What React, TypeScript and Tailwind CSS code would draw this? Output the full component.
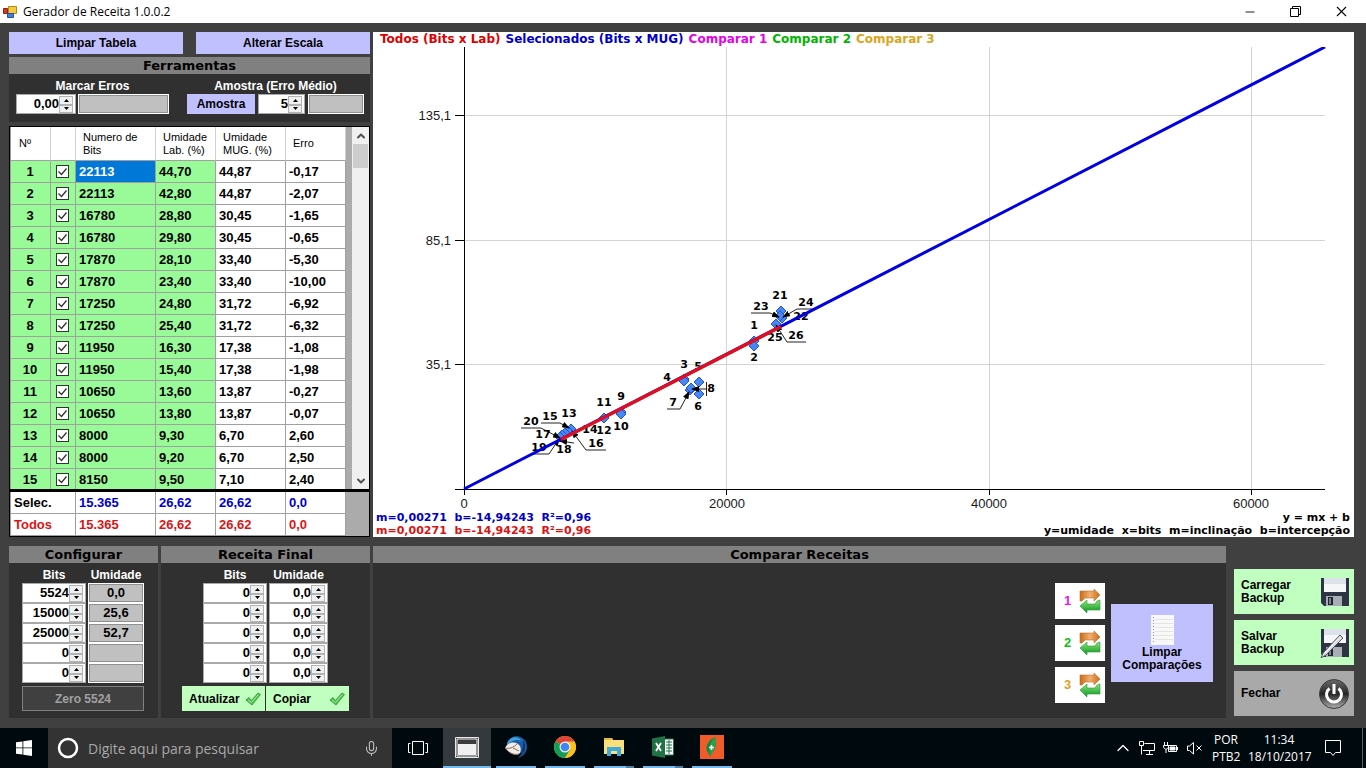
import React from 'react';
import { Minus, X, Mic, ChevronUp, ChevronDown } from 'lucide-react';

const ROWS = [
  ['22113', '44,70', '44,87', '-0,17'],
  ['22113', '42,80', '44,87', '-2,07'],
  ['16780', '28,80', '30,45', '-1,65'],
  ['16780', '29,80', '30,45', '-0,65'],
  ['17870', '28,10', '33,40', '-5,30'],
  ['17870', '23,40', '33,40', '-10,00'],
  ['17250', '24,80', '31,72', '-6,92'],
  ['17250', '25,40', '31,72', '-6,32'],
  ['11950', '16,30', '17,38', '-1,08'],
  ['11950', '15,40', '17,38', '-1,98'],
  ['10650', '13,60', '13,87', '-0,27'],
  ['10650', '13,80', '13,87', '-0,07'],
  ['8000', '9,30', '6,70', '2,60'],
  ['8000', '9,20', '6,70', '2,50'],
  ['8150', '9,50', '7,10', '2,40'],
];

const TOTALS = [
  { label: 'Selec.', head: 'text-black', color: 'text-[#0000cd]', values: ['15.365', '26,62', '26,62', '0,0'] },
  { label: 'Todos', head: 'text-[#dc1414]', color: 'text-[#dc1414]', values: ['15.365', '26,62', '26,62', '0,0'] },
];

const CONFIG = [
  { bits: '5524', umidade: '0,0' },
  { bits: '15000', umidade: '25,6' },
  { bits: '25000', umidade: '52,7' },
  { bits: '0', umidade: '' },
  { bits: '0', umidade: '' },
];

const LEGEND = [
  { text: 'Todos (Bits x Lab)', color: 'text-[#dc0000]' },
  { text: 'Selecionados (Bits x MUG)', color: 'text-[#0000c8]' },
  { text: 'Comparar 1', color: 'text-[#e600e6]' },
  { text: 'Comparar 2', color: 'text-[#00b400]' },
  { text: 'Comparar 3', color: 'text-[#daa520]' },
];

const COMPARE = [
  { n: 1, color: 'text-[#f014f0]' },
  { n: 2, color: 'text-[#14be14]' },
  { n: 3, color: 'text-[#e0a030]' },
];

// Chart data, in chart units
const POINTS = [
  [754, 341], [754, 346], [684, 379], [684, 381], [699, 382], [699, 394], [690, 390], [691, 388],
  [621, 412], [621, 414], [604, 418], [571, 429], [568, 431], [565, 433], [562, 435], [560, 437],
  [781, 311], [782, 318], [780, 316], [776, 324],
];

const POINT_LABELS: [string, number, number][] = [
  ['1', 754, 329], ['2', 754, 361], ['3', 684, 368], ['4', 667, 381], ['5', 698, 370], ['6', 698, 410],
  ['7', 673, 406], ['8', 711, 392], ['9', 621, 400], ['10', 621, 430], ['11', 604, 406], ['12', 604, 434],
  ['13', 569, 417], ['14', 590, 433], ['15', 550, 420], ['16', 596, 447], ['17', 543, 438], ['18', 564, 453],
  ['19', 539, 451], ['20', 531, 425], ['21', 780, 299], ['22', 801, 320], ['23', 761, 310], ['24', 806, 306],
  ['25', 775, 341], ['26', 796, 339],
];

const CALLOUTS = [
  '521,428 541,428 560,438',
  '541,423 560,423 569,428',
  '533,454 549,454 559,439',
  '574,443 560,441',
  '606,450 586,450 572,431',
  '667,409 680,409 689,392',
  '706,389 692,389',
  '813,309 797,309 783,317',
  '751,313 770,313 779,317',
  '806,342 787,342 776,325',
];

interface SpinnerProps {
  label: string;
  value: string;
  className?: string;
}

const Spinner: React.FC<SpinnerProps> = ({ label, value, className }) => (
  <div className={`flex h-5 border border-[#a9a9a9] bg-white ${className ?? ''}`}>
    <input
      aria-label={label}
      defaultValue={value}
      className="min-w-0 flex-1 bg-white pb-px text-right text-[13px] leading-4 font-bold text-black outline-none"
    />
    <div className="flex w-4 shrink-0 flex-col pt-px pr-[2px]">
      <button aria-label={`${label} +`} className="flex flex-1 items-center justify-center border border-[#b4b4b4] bg-[#f0f0f0]">
        <svg width="5" height="3" viewBox="0 0 5 3"><path d="M0 3 2.500 0 5 3z" /></svg>
      </button>
      <button aria-label={`${label} -`} className="flex flex-1 items-center justify-center border border-[#b4b4b4] bg-[#f0f0f0]">
        <svg width="5" height="3" viewBox="0 0 5 3"><path d="M0 0 2.500 3 5 0z" /></svg>
      </button>
    </div>
  </div>
);

const ValueBox: React.FC<{ label: string; value?: string; className?: string }> = ({ label, value = '', className }) => (
  <input
    readOnly
    aria-label={label}
    value={value}
    className={`h-5 min-w-0 border border-white bg-[#c0c0c0] pb-px text-center text-[13px] leading-4 font-bold text-black outline outline-1 -outline-offset-2 outline-[#909090] ${className ?? ''}`}
  />
);

const RowCheck: React.FC<{ label: string }> = ({ label }) => (
  <label className="ml-[2px] grid h-[13px] w-[13px]">
    <input
      type="checkbox"
      defaultChecked
      aria-label={label}
      className="peer col-start-1 row-start-1 h-[13px] w-[13px] appearance-none border border-[#333] bg-white"
    />
    <svg width="13" height="13" viewBox="0 0 13 13" className="pointer-events-none invisible col-start-1 row-start-1 peer-checked:visible">
      <path d="M2.500 6.500 5.500 9.500 10.500 3.500" fill="none" stroke="#333" strokeWidth="1.300" />
    </svg>
  </label>
);

const PanelTitle: React.FC<{ children: React.ReactNode }> = ({ children }) => (
  <h2 className="h-[17px] bg-[#808080] text-center font-['DejaVu_Sans'] text-[13px] leading-[17px] font-bold text-black">
    {children}
  </h2>
);

const CheckIcon = () => (
  <svg width="16" height="14" viewBox="0 0 16 14">
    <path d="M1 8 4 5.500 6.500 8.500 13 1 15.500 2.500 7 13z" fill="#4cc44c" stroke="#2f8f3a" strokeWidth="0.8" />
    <path d="M3 8 6.500 10.500 13.500 2.500" fill="none" stroke="#a4eea0" strokeWidth="1" />
  </svg>
);

const SwapIcon = () => (
  <svg width="22" height="24" viewBox="0 0 22 24">
    <defs>
      <linearGradient id="swapO" x1="0" y1="0" x2="1" y2="0">
        <stop offset="0" stopColor="#c86a18" />
        <stop offset="0.5" stopColor="#f0b070" />
        <stop offset="1" stopColor="#cc6a14" />
      </linearGradient>
      <linearGradient id="swapG" x1="0" y1="0" x2="0" y2="1">
        <stop offset="0" stopColor="#8ae47c" />
        <stop offset="1" stopColor="#0c9420" />
      </linearGradient>
    </defs>
    <path d="M1 12V2h14V0l6 6-6 6V9H6l-3 3z" fill="url(#swapO)" stroke="#c07028" strokeWidth="0.6" />
    <path d="M21 11v10H8v3l-7-7 7-6v4h8l2-3z" fill="url(#swapG)" stroke="#229a30" strokeWidth="0.6" />
  </svg>
);

const FloppyIcon = ({ pen = false }: { pen?: boolean }) => (
  <svg width="30" height="30" viewBox="0 0 30 30">
    <path d="M1 1h28v28H4l-3-3z" fill="#2e3444" />
    <path d="M4 1h22v14H4z" fill="#dde2ea" />
    <path d="M4 7h22v8H4z" fill="#f4f6f8" />
    <path d="M6 19h16v10H6z" fill="#a9adb5" />
    <path d="M8 20h5v8H8z" fill="#20242e" />
    <path d="M9 21h2v6H9z" fill="#7c828e" />
    {pen && (
      <>
        <path d="M1 30 3 25 20 7l3 3L6 27z" fill="#d8dade" stroke="#50545c" strokeWidth="1" />
        <path d="M5 25 20 9" stroke="#fff" strokeWidth="1" />
      </>
    )}
  </svg>
);

const PowerIcon = () => (
  <svg width="30" height="30" viewBox="0 0 30 30">
    <defs>
      <linearGradient id="power" x1="0" y1="0" x2="0" y2="1">
        <stop offset="0" stopColor="#6a6a6a" />
        <stop offset="0.5" stopColor="#262626" />
        <stop offset="1" stopColor="#b0b0b0" />
      </linearGradient>
    </defs>
    <circle cx="15" cy="15" r="14.500" fill="url(#power)" stroke="#3c3c3c" />
    <path d="M10.500 9.500a7.500 7.500 0 1 0 9 0M15 5v10" fill="none" stroke="#fff" strokeWidth="3" />
  </svg>
);

const PaperIcon = () => (
  <svg width="23" height="30" viewBox="0 0 23 30">
    <path d="M0 0h23v30H0z" fill="#f8f8f8" />
    <path d="M4 4.500h18M4 8.500h18M4 12.500h18M4 16.500h18M4 20.500h18M4 24.500h18" stroke="#e4e4e4" />
    <path d="M2.500 2v26" stroke="#909090" strokeDasharray="1 2" />
  </svg>
);

const TitleBar = () => (
  <header className="flex h-[23px] shrink-0 items-center bg-white pr-[2px] pl-[3px] text-black">
    <svg width="14" height="14" viewBox="0 0 14 14">
      <path d="M5.500 1.500h8v7h-8z" fill="#f5c93c" stroke="#b08a20" />
      <path d="M.5 3.500h4v5h-4z" fill="#d03a28" stroke="#902010" />
      <path d="M4.500 8.500h6v4h-6z" fill="#4a7fd8" stroke="#2850a0" />
    </svg>
    <h1 className="ml-[6px] flex-1 font-['Open_Sans'] text-[12px] leading-4 font-normal">Gerador de Receita 1.0.0.2</h1>
    <button aria-label="Minimizar" className="flex h-full w-[45px] items-center justify-center"><Minus size={14} strokeWidth={1.500} /></button>
    <button aria-label="Restaurar" className="flex h-full w-[46px] items-center justify-center">
      <svg width="11" height="11" viewBox="0 0 11 11" fill="none" stroke="#000">
        <path d="M.5 2.500h8v8h-8zM2.500 2.500v-2h8v8h-2" />
      </svg>
    </button>
    <button aria-label="Fechar janela" className="flex h-full w-[46px] items-center justify-center"><X size={17} strokeWidth={1.500} /></button>
  </header>
);

const Tools = () => (
  <section>
    <div className="mb-[3px] grid grid-cols-2 gap-[13px]">
      <button className="h-[22px] bg-[#c0c0ff]">Limpar Tabela</button>
      <button className="h-[22px] bg-[#c0c0ff]">Alterar Escala</button>
    </div>
    <PanelTitle>Ferramentas</PanelTitle>
    <div className="flex h-12 justify-between bg-[#303030] pt-1 pr-[6px] pl-[7px] text-white">
      <div>
        <div className="text-center leading-4">Marcar Erros</div>
        <div className="flex gap-[2px]">
          <Spinner label="Marcar Erros" value="0,00" className="w-[60px]" />
          <ValueBox label="Total de erros" className="w-[91px]" />
        </div>
      </div>
      <div>
        <div className="text-center leading-4">Amostra (Erro Médio)</div>
        <div className="flex gap-[3px]">
          <button className="h-5 w-[68px] bg-[#c0c0ff] text-black">Amostra</button>
          <Spinner label="Amostra" value="5" className="w-[47px]" />
          <ValueBox label="Erro médio" className="w-[56px]" />
        </div>
      </div>
    </div>
  </section>
);

const Columns = () => (
  <colgroup>
    <col className="w-10" />
    <col className="w-[25px]" />
    <col className="w-20" />
    <col className="w-[60px]" />
    <col className="w-[70px]" />
    <col className="w-[60px]" />
  </colgroup>
);

const DataGrid = () => {
  const head = 'h-[34px] border-r border-b border-[#d0d0d0] border-b-[#a0a0a0] bg-white p-0 text-left align-middle text-[11px] leading-[13px] font-normal';
  const cell = 'h-[22px] border-r border-b border-[#a0a0a0] p-0 pl-[3px] text-[13px] leading-4';
  return (
    <section className="mt-1 border border-black bg-black text-black">
      <div className="flex h-[362px] overflow-hidden bg-[#ababab]">
        <table className="w-[336px] table-fixed border-separate border-spacing-0 border-l border-[#a0a0a0]">
          <Columns />
          <thead>
            <tr>
              <th className={`${head} pl-2`}>Nº</th>
              <th className={head} aria-label="Selecionado" />
              <th className={`${head} pl-[7px]`}>Numero de<br />Bits</th>
              <th className={`${head} pl-[7px]`}>Umidade<br />Lab. (%)</th>
              <th className={`${head} pl-[7px]`}>Umidade<br />MUG. (%)</th>
              <th className={`${head} pl-[7px]`}>Erro</th>
            </tr>
          </thead>
          <tbody>
            {ROWS.map((row, i) => (
              <tr key={i}>
                <td className={`${cell} bg-[#98fb98] pr-1 text-center`}>{i + 1}</td>
                <td className={`${cell} bg-[#98fb98]`}><RowCheck label={`Linha ${i + 1}`} /></td>
                <td className={`${cell} ${i === 0 ? 'bg-[#0078d7] text-white' : 'bg-[#98fb98]'}`}>{row[0]}</td>
                <td className={`${cell} bg-[#98fb98]`}>{row[1]}</td>
                <td className={`${cell} bg-white`}>{row[2]}</td>
                <td className={`${cell} bg-white`}>{row[3]}</td>
              </tr>
            ))}
          </tbody>
        </table>
        <div className="ml-auto flex w-[17px] flex-col items-center bg-[#f0f0f0]">
          <button aria-label="Rolar para cima" className="flex h-[17px] items-center text-[#505050]"><ChevronUp size={12} strokeWidth={4} /></button>
          <div className="h-6 w-[15px] bg-[#cdcdcd]" />
          <button aria-label="Rolar para baixo" className="mt-auto flex h-[17px] items-center text-[#505050]"><ChevronDown size={12} strokeWidth={4} /></button>
        </div>
      </div>
      <div className="mt-[3px] bg-[#ababab]">
        <table className="w-[336px] table-fixed border-separate border-spacing-0 border-l border-[#a0a0a0]">
          <Columns />
          <tbody>
            {TOTALS.map(t => (
              <tr key={t.label} className="bg-white">
                <th colSpan={2} className={`${cell} text-left ${t.head}`}>{t.label}</th>
                {t.values.map((v, i) => (
                  <td key={i} className={`${cell} ${t.color}`}>{v}</td>
                ))}
              </tr>
            ))}
          </tbody>
        </table>
      </div>
    </section>
  );
};

const Chart = () => (
  <section className="flex min-w-0 flex-1 flex-col bg-white font-['DejaVu_Sans'] text-[11px] leading-[13px] whitespace-pre">
    <div className="flex h-[15px] gap-[5px] pt-px pl-[7px] text-[12px]">
      {LEGEND.map(l => (
        <span key={l.text} className={l.color}>{l.text}</span>
      ))}
    </div>
    <svg viewBox="373 47 981 464" className="min-h-0 w-full flex-1">
      <defs>
        <marker id="arrow" markerWidth="8" markerHeight="6" refX="7" refY="3" orient="auto">
          <path d="M0 0 8 3 0 6z" fill="#000" />
        </marker>
      </defs>
      <path d="M464 115.500H1325M464 240.500H1325M464 364.500H1325M726.500 47V489M989.500 47V489M1251.500 47V489" stroke="#d3d3d3" />
      <path d="M464.500 47V495M455 489.500H1325M455 115.500H464M455 240.500H464M455 364.500H464M726.500 489V495M989.500 489V495M1251.500 489V495" stroke="#000" />
      <g fontFamily="Liberation Sans" fontSize="13" fontWeight="400" fill="#1a1a1a">
        <text x="451" y="120" textAnchor="end">135,1</text>
        <text x="451" y="245" textAnchor="end">85,1</text>
        <text x="451" y="369" textAnchor="end">35,1</text>
        <text x="464" y="508" textAnchor="middle">0</text>
        <text x="727" y="508" textAnchor="middle">20000</text>
        <text x="989" y="508" textAnchor="middle">40000</text>
        <text x="1251" y="508" textAnchor="middle">60000</text>
      </g>
      {POINTS.map(([x, y], i) => (
        <path key={i} d={`M${x} ${y - 5}l5 5-5 5-5-5z`} fill="#4488f4" stroke="#2a50d0" />
      ))}
      {CALLOUTS.map(c => (
        <polyline key={c} points={c} fill="none" stroke="#222" markerEnd="url(#arrow)" />
      ))}
      <path d="M706.500 382V396" stroke="#222" />
      {POINT_LABELS.map(([text, x, y]) => (
        <text key={text} x={x} y={y} textAnchor="middle" fontSize="11" fontWeight="700">{text}</text>
      ))}
      <path d="M464 489 1325 47" stroke="#0000e0" strokeWidth="3" />
      <path d="M561 439.500 781 326.500" stroke="#dc1020" strokeWidth="3.500" />
    </svg>
    <div className="flex justify-between pr-1 pl-[3px] text-black">
      <div>
        <div className="text-[#0000c8]">{'m=0,00271  b=-14,94243  R²=0,96'}</div>
        <div className="text-[#d81414]">{'m=0,00271  b=-14,94243  R²=0,96'}</div>
      </div>
      <div className="text-right">
        <div>y = mx + b</div>
        <div>{'y=umidade  x=bits  m=inclinação  b=intercepção'}</div>
      </div>
    </div>
  </section>
);

const ConfigPanel = () => (
  <section className="w-[149px] bg-[#303030]">
    <PanelTitle>Configurar</PanelTitle>
    <div className="grid grid-cols-[64px_56px] gap-x-[2px] px-[13px] pt-1 text-center leading-4 text-white">
      <span>Bits</span>
      <span>Umidade</span>
      {CONFIG.map((row, i) => (
        <React.Fragment key={i}>
          <Spinner label={`Configurar bits ${i + 1}`} value={row.bits} />
          <ValueBox label={`Configurar umidade ${i + 1}`} value={row.umidade} className="w-full" />
        </React.Fragment>
      ))}
    </div>
    <button disabled className="mx-[13px] mt-[3px] h-[25px] w-[122px] border border-[#808080] bg-[#404040] text-[#a0a0a0]">Zero 5524</button>
  </section>
);

const RecipePanel = () => (
  <section className="w-[209px] bg-[#303030]">
    <PanelTitle>Receita Final</PanelTitle>
    <div className="grid grid-cols-[64px_59px] justify-center gap-x-[2px] pt-1 text-center leading-4 text-white">
      <span>Bits</span>
      <span>Umidade</span>
      {[1, 2, 3, 4, 5].map(n => (
        <React.Fragment key={n}>
          <Spinner label={`Receita bits ${n}`} value="0" />
          <Spinner label={`Receita umidade ${n}`} value="0,0" />
        </React.Fragment>
      ))}
    </div>
    <div className="mt-[3px] flex justify-center gap-px">
      <button className="flex h-[25px] w-[83px] items-center justify-between bg-[#c0ffc0] pr-1 pl-[7px]">Atualizar <CheckIcon /></button>
      <button className="flex h-[25px] w-[83px] items-center justify-between bg-[#c0ffc0] pr-1 pl-[7px]">Copiar <CheckIcon /></button>
    </div>
  </section>
);

const ComparePanel = () => (
  <section className="min-w-0 flex-1 bg-[#303030]">
    <PanelTitle>Comparar Receitas</PanelTitle>
    <div className="flex items-center justify-end gap-[6px] pt-5 pr-[13px]">
      <div className="flex flex-col gap-[6px]">
        {COMPARE.map(c => (
          <button key={c.n} className={`flex h-9 w-[50px] items-center justify-between bg-white pr-1 pl-[9px] text-[13px] ${c.color}`}>
            {c.n}
            <SwapIcon />
          </button>
        ))}
      </div>
      <button className="flex h-[78px] w-[102px] flex-col items-center justify-center gap-px bg-[#c0c0ff] leading-[13px]">
        <PaperIcon />
        <span>Limpar<br />Comparações</span>
      </button>
    </div>
  </section>
);

const Actions = () => (
  <section className="ml-[5px] flex w-[120px] flex-col gap-[6px] pt-[23px] text-left leading-[13px]">
    <button className="flex h-[45px] items-center justify-between bg-[#c0ffc0] pr-1 pl-[7px] text-left">
      <span>Carregar<br />Backup</span>
      <FloppyIcon />
    </button>
    <button className="flex h-[45px] items-center justify-between bg-[#c0ffc0] pr-1 pl-[7px] text-left">
      <span>Salvar<br />Backup</span>
      <FloppyIcon pen />
    </button>
    <button className="flex h-[45px] items-center justify-between bg-[#a9a9a9] pr-[5px] pl-[7px] text-left">
      Fechar
      <PowerIcon />
    </button>
  </section>
);

const APPS = [
  {
    name: 'Thunderbird',
    stacked: false,
    icon: (
      <svg width="24" height="24" viewBox="0 0 24 24">
        <path d="M7 3C12-1 20 2 22 7c3 7-1 14-8 16 2-2 3-3 3-5L3 10c0-3 2-5 4-7z" fill="#1a5ca6" />
        <path d="M6 4c4-3 9-2 12 2-5-2-10-1-15 4 0-3 1-4 3-6z" fill="#3fa0e0" />
        <path d="M19 5c4 5 2 13-3 17 2-5 4-11 3-17z" fill="#123464" />
        <path d="M1 13C3 8 9 6 14 9c4 3 3 8 1 10-3 2-9 0-14-6z" fill="#f0ece6" />
        <path d="M1 13c4 1 8 0 12-4M9 13l6 3M3 15c3 4 8 5 12 4" fill="none" stroke="#8a6c60" strokeWidth="1" />
      </svg>
    ),
  },
  {
    name: 'Chrome',
    stacked: false,
    icon: (
      <svg width="22" height="22" viewBox="0 0 22 22">
        <circle cx="11" cy="11" r="11" fill="#fbc116" />
        <path d="M11 11 1.500 5.500A11 11 0 0 1 20.500 5.500z" fill="#db4437" />
        <path d="M11 11 1.500 5.500A11 11 0 0 0 11 22l5-8z" fill="#0f9d58" />
        <path d="M11 5.500h9.500A11 11 0 0 1 11 22l5-8z" fill="#fbc116" />
        <circle cx="11" cy="11" r="5.500" fill="#f1f1f1" />
        <circle cx="11" cy="11" r="4.300" fill="#4285f4" />
      </svg>
    ),
  },
  {
    name: 'Explorador de Arquivos',
    stacked: true,
    icon: (
      <svg width="22" height="20" viewBox="0 0 22 20">
        <path d="M1 1h8l1 2h11v14H1z" fill="#fbdf7c" />
        <path d="M1 1h8l1 2H1z" fill="#e8b840" />
        <path d="M4 10h14v9h-4v-5H8v5H4z" fill="#3fa9dc" />
      </svg>
    ),
  },
  {
    name: 'Excel',
    stacked: true,
    icon: (
      <svg width="22" height="22" viewBox="0 0 22 22">
        <path d="M12 3h9.500v16H12z" fill="#fff" stroke="#1f7244" />
        <path d="M14 6h6M14 9h6M14 12h6M14 15h6M17 4v14" stroke="#1f7244" />
        <path d="M0 2.500 13 0v22L0 19.500z" fill="#1f7244" />
        <path d="m4 7 5 8M9 7l-5 8" stroke="#fff" strokeWidth="1.800" />
      </svg>
    ),
  },
  {
    name: 'Medidor',
    stacked: false,
    icon: (
      <svg width="24" height="24" viewBox="0 0 24 24">
        <path d="M0 0h24v24H0z" fill="#f15a29" />
        <path d="M15 2c-6 3-10 8-8 14 1 2 2 3 3 5l1 1c-1-3 0-4 1-5 5-4 4-9 3-15z" fill="#138a3a" />
        <path d="M15 2c-5 5-7 10-5 19 5-5 7-11 5-19z" fill="#2aa04a" />
        <path d="M11.500 10v5M9 12.500h5" stroke="#fff" strokeWidth="1.500" />
      </svg>
    ),
  },
];

const Taskbar = () => (
  <footer className="flex h-10 shrink-0 items-center bg-[#000a0e] font-['Open_Sans'] font-normal text-white">
    <button aria-label="Iniciar" className="flex h-full w-12 items-center justify-center">
      <svg width="16" height="16" viewBox="0 0 16 16" fill="#fff">
        <path d="M0 2.300 6.500 1.400V7.500H0zM7.300 1.300 16 0v7.500H7.300zM0 8.300h6.500v6.200L0 13.700zM7.300 8.300H16V16l-8.700-1.300z" />
      </svg>
    </button>
    <label className="flex h-full w-[344px] items-center bg-[#333] pr-3 pl-[9px]">
      <svg width="22" height="22" viewBox="0 0 22 22"><circle cx="11" cy="11" r="9" fill="none" stroke="#fff" strokeWidth="2.500" /></svg>
      <input
        aria-label="Pesquisar"
        placeholder="Digite aqui para pesquisar"
        className="ml-[9px] min-w-0 flex-1 bg-transparent text-[14px] outline-none placeholder:text-[#a8a8a8]"
      />
      <Mic size={17} strokeWidth={1.500} className="text-[#c0c0c0]" />
    </label>
    <button aria-label="Visão de tarefas" className="flex h-full w-[51px] items-center justify-center">
      <svg width="20" height="14" viewBox="0 0 20 14" fill="none" stroke="#fff">
        <path d="M4.500.5h11v13h-11zM2.500 2.500h-2v9h2M17.500 2.500h2v9h-2" />
      </svg>
    </button>
    <button aria-label="Gerador de Receita" className="flex h-full w-12 items-center justify-center border-b-2 border-[#76b9ed] bg-[#33393c]">
      <svg width="24" height="21" viewBox="0 0 24 21">
        <path d="M.5.5h23v20H.5z" fill="#3c3c3c" stroke="#e8e8e8" />
        <path d="M2 2h20v17H2z" fill="none" stroke="#f0f0f0" />
        <path d="M3 7h18v11H3z" fill="#f0f0f0" />
      </svg>
    </button>
    <div className="ml-[5px] flex h-full gap-[9px]">
      {APPS.map(app => (
        <button key={app.name} aria-label={app.name} className="flex h-full w-10 flex-col items-center">
          <span className="flex flex-1 items-center">{app.icon}</span>
          <span className="flex h-[2px] w-full bg-[#76b9ed]">
            {app.stacked && <span className="ml-auto w-2 bg-[#4f7ea3]" />}
          </span>
        </button>
      ))}
    </div>
    <div className="ml-auto flex h-full items-center">
      <ChevronUp size={20} strokeWidth={1.500} />
      <svg width="16" height="14" viewBox="0 0 16 14" fill="none" stroke="#fff" className="ml-[6px]">
        <path d="M5.500 2.500h10v7H4M.5.500h4v4h-4zM2.500 5v8.500M7 13.500h7M10.500 10v3" />
      </svg>
      <svg width="16" height="12" viewBox="0 0 16 12" fill="none" stroke="#fff" className="ml-2">
        <path d="M5.500 3.500h8v6h-8zM14.500 5v3M1.500 0v3M4.500 0v3M.5 3.500h5v2L3 7.500.5 5.500zM3 7.500V11" />
        <path d="M7 5h5v3H7z" fill="#fff" />
      </svg>
      <svg width="16" height="14" viewBox="0 0 16 14" fill="none" stroke="#fff" className="ml-2">
        <path d="M.5 5v4.500h2L6.500 13V1.500L2.500 5zM9.500 4.500l5 5M14.500 4.500l-5 5" />
      </svg>
      <div className="ml-[9px] w-7 text-center text-[12px] leading-[17px]">POR<br />PTB2</div>
      <div className="ml-2 w-[62px] text-center text-[12px] leading-[17px] whitespace-nowrap">11:34<br />18/10/2017</div>
      <button aria-label="Notificações" className="mr-[21px] ml-[15px] flex items-center">
        <svg width="16" height="17" viewBox="0 0 16 17" fill="none" stroke="#fff">
          <path d="M.5.500h15v12h-5l-2.500 3-2.500-3h-5z" />
        </svg>
      </button>
      <div className="mr-[3px] h-full w-px bg-[#5a6266]" />
    </div>
  </footer>
);

export default function App() {
  return (
    <div className="flex min-h-screen flex-col bg-[#404040] font-['Liberation_Sans',sans-serif] text-[12px] font-bold text-black">
      <TitleBar />
      <main className="flex flex-1 flex-col gap-[9px] pt-[9px] pr-3 pb-[10px] pl-[9px]">
        <div className="flex flex-1 gap-[3px]">
          <div className="w-[361px] shrink-0">
            <Tools />
            <DataGrid />
          </div>
          <Chart />
        </div>
        <div className="flex min-h-[172px] gap-[3px]">
          <ConfigPanel />
          <RecipePanel />
          <ComparePanel />
          <Actions />
        </div>
      </main>
      <Taskbar />
    </div>
  );
}
